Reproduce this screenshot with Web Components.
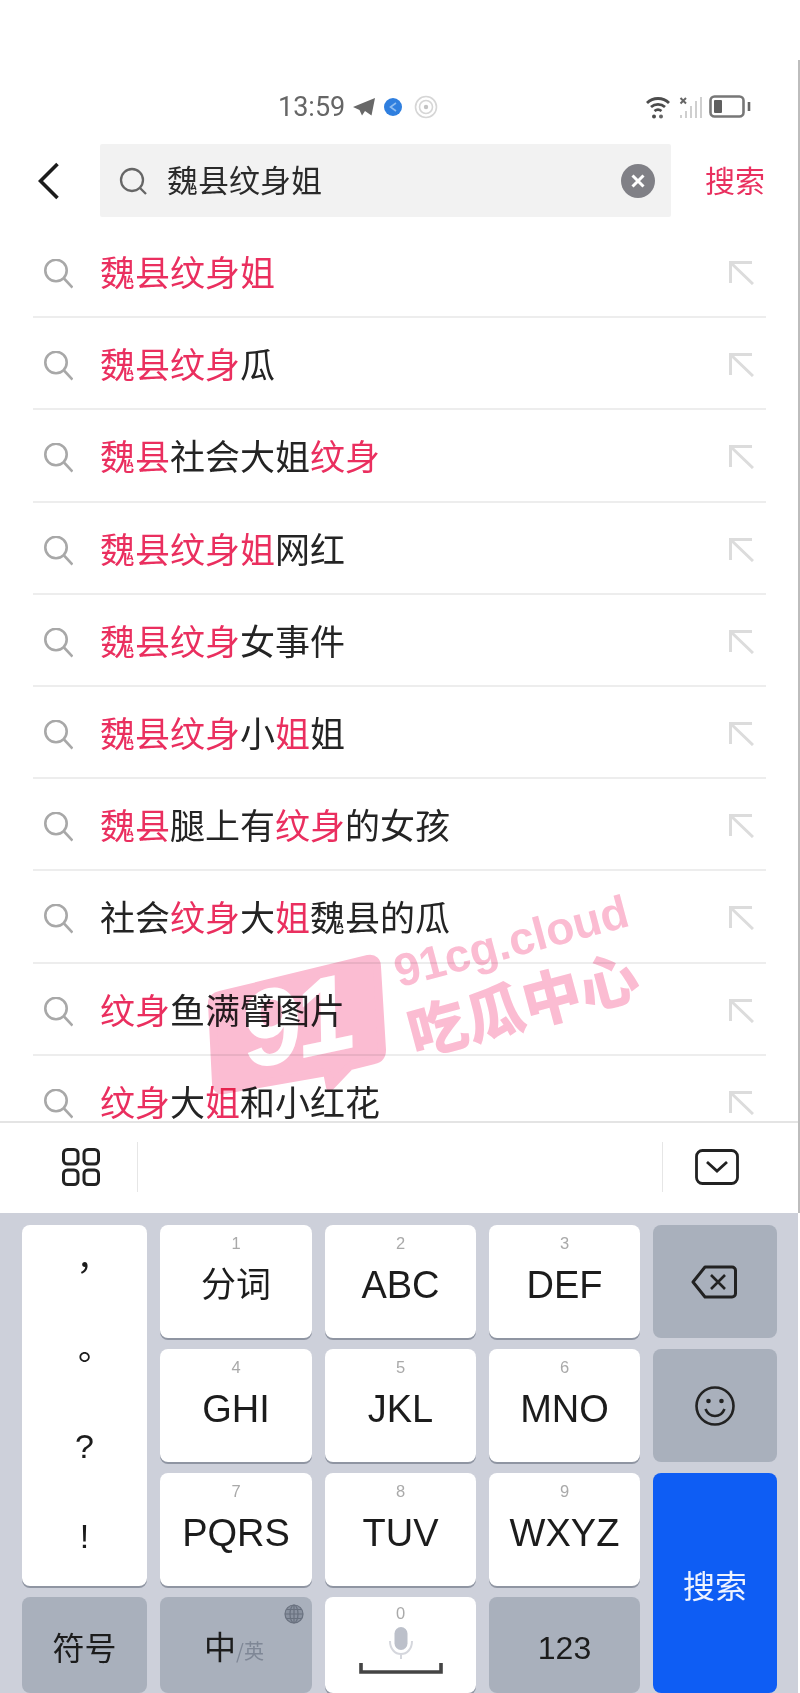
<!DOCTYPE html>
<html lang="zh"><head><meta charset="utf-8"><title>搜索</title>
<style>
html,body{margin:0;padding:0;background:#fff;height:1693px;overflow:hidden}
body{font-family:"Liberation Sans","Noto Sans CJK SC",sans-serif;color:#222}
#page{display:block;position:relative;width:800px;height:1693px;overflow:hidden;filter:blur(.45px)}
</style></head><body>
<div id="page">
<app-shell>
  <status-bar></status-bar>
  <search-header text="魏县纹身姐" action="搜索"></search-header>
  <suggest-list>
    <suggest-row><em>魏县纹身姐</em></suggest-row>
    <suggest-row><em>魏县纹身</em>瓜</suggest-row>
    <suggest-row><em>魏县</em>社会大姐<em>纹身</em></suggest-row>
    <suggest-row><em>魏县纹身姐</em>网红</suggest-row>
    <suggest-row><em>魏县纹身</em>女事件</suggest-row>
    <suggest-row><em>魏县纹身</em>小<em>姐</em>姐</suggest-row>
    <suggest-row><em>魏县</em>腿上有<em>纹身</em>的女孩</suggest-row>
    <suggest-row>社会<em>纹身</em>大<em>姐</em>魏县的瓜</suggest-row>
    <suggest-row><em>纹身</em>鱼满臂图片</suggest-row>
    <suggest-row last><em>纹身</em>大<em>姐</em>和小红花</suggest-row>
  </suggest-list>
  <kb-toolbar></kb-toolbar>
</app-shell>
<t9-keyboard></t9-keyboard>
<water-mark></water-mark>
</div>
<script>
const CJK='"Noto Sans CJK SC",sans-serif';
function def(name,html,setup){
  customElements.define(name,class extends HTMLElement{
    constructor(){super();this.attachShadow({mode:'open'}).innerHTML=html;}
    connectedCallback(){if(setup)setup(this,this.shadowRoot);}
  });
}
def('app-shell',`<style>:host{display:block;width:800px;height:1153px;margin-top:60px;box-sizing:border-box;border-right:2px solid #bdbdbd;background:#fff}</style><slot></slot>`);

def('status-bar',`<style>
:host{display:flex;align-items:center;height:84px;box-sizing:border-box;padding:34px 47px 24px 278px;font:27px/26px Roboto,sans-serif;color:#666}
.time{margin-right:8px}.r{display:flex;align-items:center;margin-left:auto;gap:8px}
svg{display:block}
</style>
<span class="time">13:59</span>
<svg width="22" height="18" viewBox="0 0 22 18" style="margin-right:8px"><path d="M22 0 0 9l6.500 3 2.500 5.500 3-4.500 6.500 4.500z" fill="#686868"/></svg>
<svg width="20" height="20" viewBox="0 0 20 20" style="margin-right:11px"><circle cx="10" cy="10" r="9" fill="#2f7fdf"/><path d="M13 6 7.500 10l5.500 4" fill="none" stroke="#8fbdf0" stroke-width="1.600"/></svg>
<svg width="24" height="24" viewBox="0 0 24 24" fill="none" stroke="#d6d6d6"><circle cx="12" cy="12" r="10.500" stroke-width="1.600"/><circle cx="12" cy="12" r="6.500" stroke-width="1.600"/><circle cx="12" cy="12" r="2.200" fill="#c4c4c4" stroke="none"/></svg>
<div class="r">
<svg width="26" height="24" viewBox="0 0 26 24" fill="none" stroke="#4c4c4c" stroke-width="2.800"><path d="M2 8c6-6 16-6 22 0M6 12c4-3.500 10-3.500 14 0M9.500 16c2-1.500 5-1.500 7 0"/><circle cx="9" cy="21.500" r="2" fill="#4c4c4c" stroke="none"/><circle cx="16" cy="21.500" r="2" fill="#666" stroke="none"/></svg>
<svg width="24" height="24" viewBox="0 0 24 24" style="margin-left:-1px;margin-right:-1px"><path d="M2.500 3 8 8.500M8 3 2.500 8.500" stroke="#666" stroke-width="2"/><g stroke="#cfcfcf" stroke-width="2"><path d="M3 23v-3M8 23v-7M13 23V11M18 23V6M23 23V2"/></g></svg>
<svg width="42" height="23" viewBox="0 0 42 23" fill="none" style="margin-top:-2px"><rect x="1.500" y="1.500" width="33" height="20" rx="4" stroke="#777" stroke-width="2.600"/><rect x="5" y="5" width="8" height="13" rx="1" fill="#5f5f5f"/><path d="M40 7v9" stroke="#666" stroke-width="2.600"/></svg>
</div>`);

def('search-header',`<style>
:host{display:flex;align-items:center;height:73px;padding-left:38px}
.back{flex:none}
.bar{flex:none;width:571px;height:73px;margin-left:41px;background:#f2f2f2;display:flex;align-items:center;box-sizing:border-box;padding:0 16px 0 19px;border-radius:2px}
.q{font:31px/40px ${CJK};color:#2a2a2a;margin:0 0 4px 19px}
.x{margin-left:auto}
.a{margin:0 0 4px 34px;font:30px/40px ${CJK};color:#e9305f}
svg{display:block}
</style>
<svg class="back" width="21" height="38" viewBox="0 0 21 38"><path d="M19.500 2 2.500 19l17 17" fill="none" stroke="#1c1c1c" stroke-width="3.600"/></svg>
<div class="bar">
<svg width="29" height="28" viewBox="0 0 29 28" fill="none" stroke="#666" stroke-width="2.300"><circle cx="13" cy="13" r="11"/><path d="M21 21l6 6"/></svg>
<span class="q"></span>
<svg class="x" width="34" height="34" viewBox="0 0 34 34"><circle cx="17" cy="17" r="17" fill="#808086"/><path d="M11.500 11.500l11 11M22.500 11.500l-11 11" stroke="#fff" stroke-width="3"/></svg>
</div>
<span class="a"></span>`,(h,s)=>{s.querySelector('.q').textContent=h.getAttribute('text');s.querySelector('.a').textContent=h.getAttribute('action');});

def('suggest-list',`<style>:host{display:block;height:895px;margin-top:9px}</style><slot></slot>`);

def('suggest-row',`<style>
:host{display:flex;align-items:center;height:92.2px;box-sizing:border-box;margin:0 32px 0 33px;padding:0 12px 0 11px;border-bottom:2px solid #ededed}
:host([last]){height:65.2px;border-bottom:0;padding-top:26px}
.t{margin-left:27px;font:35px/36px ${CJK};color:#242424;white-space:nowrap}
::slotted(em){font-style:normal;color:#ea2f5f}
.arrow{margin:4px 0 0 auto}
.mag{margin-top:6px}
svg{display:block;flex:none}
</style>
<svg class="mag" width="29" height="30" viewBox="0 0 29 30" fill="none" stroke="#a8a8a8" stroke-width="2.600"><circle cx="12" cy="11.500" r="10.700"/><path d="M20 19.500l8.500 9"/></svg>
<span class="t"><slot></slot></span>
<svg class="arrow" width="26" height="24" viewBox="0 0 26 24" fill="none" stroke="#dcdcdc" stroke-width="3"><path d="M24 1.500H2.500V22M2.500 1.500 25 23"/></svg>`);

def('kb-toolbar',`<style>
:host{display:flex;align-items:center;height:91px;box-sizing:border-box;border-top:2px solid #e4e4e4;background:#fff;padding:0 59px 2px 62px}
i{display:block;width:1px;height:50px;background:#e6e6e6}
svg{display:block;flex:none}
</style>
<svg width="38" height="38" viewBox="0 0 38 38" fill="none" stroke="#222" stroke-width="3"><rect x="1.500" y="1.500" width="14.500" height="14.500" rx="4"/><rect x="22" y="1.500" width="14.500" height="14.500" rx="4"/><rect x="1.500" y="22" width="14.500" height="14.500" rx="4"/><rect x="22" y="22" width="14.500" height="14.500" rx="4"/></svg>
<i style="margin-left:37px"></i>
<i style="margin-left:auto"></i>
<svg style="margin-left:32px" width="44" height="36" viewBox="0 0 44 36" fill="none" stroke="#222" stroke-width="2.800"><rect x="1.500" y="1.500" width="41" height="33" rx="6"/><path d="M12 13l10 9 10-9"/></svg>`);

def('kb-key',`<style>
:host{display:flex;flex-direction:column;align-items:center;position:relative;box-sizing:border-box;background:#fff;border-radius:8px;box-shadow:0 2px 0 #8f95a2;padding-top:9px;font:38px/44px "Liberation Sans",${CJK};color:#1c1c1c;min-width:0}
.d{font:16.500px/18px "Liberation Sans",sans-serif;color:#a9a9a9;margin-bottom:11px}
.d:empty{display:none}
:host([tone=gray]){background:#a9b0bc;box-shadow:none;justify-content:center;padding-top:6px}
:host([tone=blue]){background:#0e5df4;box-shadow:none;color:#eef3ff;justify-content:center;padding-top:2px;font-size:32px}
:host([small]){font-size:32px}
:host([icon]){justify-content:center;padding-top:0}
</style><span class="d"></span><slot></slot>`,(h,s)=>{s.querySelector('.d').textContent=h.getAttribute('digit')||'';});

def('t9-keyboard',`<style>
:host{display:grid;width:798px;height:480px;box-sizing:border-box;background:#cdd0da;padding:12px 0 0 22px;grid-template-columns:125px 152px 151px 151px 124px;grid-template-rows:113px 113px 113px 1fr;gap:11px 13px}
.p{grid-row:span 3;display:flex;flex-direction:column;padding:0;background:#fff;border-radius:8px;box-shadow:0 2px 0 #8f95a2;font:34px/82px "Noto Sans CJK TC",sans-serif;color:#1c1c1c;text-align:center}
.p span{display:block;height:90px}
.p .l{font-family:"Liberation Sans",sans-serif}
svg{display:block}
.zh{display:flex;align-items:baseline;margin-left:-4px}
.zh b{font-weight:400;font-size:32px}.zh small{font-size:20px;color:#7f8796}
.globe{position:absolute;right:8px;top:7px}
.cn{font-family:${CJK}}
.fc{font-size:35px;margin-top:-3px}
.sy{margin-top:-4px}
</style>
<div class="p"><span>，</span><span>。</span><span class="l">?</span><span class="l">!</span></div>
<kb-key digit="1"><span class="cn fc">分词</span></kb-key>
<kb-key digit="2">ABC</kb-key>
<kb-key digit="3">DEF</kb-key>
<kb-key tone="gray" icon><svg style="margin-left:-3px" width="46" height="34" viewBox="0 0 46 34" fill="none" stroke="#222" stroke-width="3"><path d="M14 2h27a3.500 3.500 0 0 1 3.500 3.500v23a3.500 3.500 0 0 1-3.500 3.500H14L2 17z" stroke-linejoin="round"/><path d="M20 10l14 14M34 10 20 24" stroke-width="2.600"/></svg></kb-key>
<kb-key digit="4">GHI</kb-key>
<kb-key digit="5">JKL</kb-key>
<kb-key digit="6">MNO</kb-key>
<kb-key tone="gray" icon><svg width="40" height="40" viewBox="0 0 40 40" fill="none" stroke="#222" stroke-width="2.600"><circle cx="20" cy="20" r="18.500"/><circle cx="13.500" cy="15" r="2.300" fill="#222" stroke="none"/><circle cx="26.500" cy="15" r="2.300" fill="#222" stroke="none"/><path d="M10.500 23c2 5 5.500 7 9.500 7s7.500-2 9.500-7"/></svg></kb-key>
<kb-key digit="7">PQRS</kb-key>
<kb-key digit="8">TUV</kb-key>
<kb-key digit="9">WXYZ</kb-key>
<kb-key tone="blue" style="grid-row:span 2"><span class="cn">搜索</span></kb-key>
<kb-key tone="gray" small><span class="cn sy">符号</span></kb-key>
<kb-key tone="gray" small><div class="zh cn"><b>中</b><small>/英</small></div><svg class="globe" width="20" height="20" viewBox="0 0 20 20" fill="none" stroke="#69717f" stroke-width="1.200"><circle cx="10" cy="10" r="9" fill="#8a92a0"/><ellipse cx="10" cy="10" rx="4" ry="9"/><path d="M1 10h18M2.500 5.500h15M2.500 14.500h15M10 1v18"/></svg></kb-key>
<kb-key digit="0" style="padding-top:7px"><svg style="margin-top:-10px" width="84" height="62" viewBox="0 0 84 62" fill="none"><rect x="35.500" y="4" width="13" height="23" rx="6.500" fill="#bcc0ca"/><path d="M31 18c0 8 5 13 11 13s11-5 11-13M42 31v5" stroke="#d5d7dd" stroke-width="2"/><path d="M2 40v9h80v-9" stroke="#444" stroke-width="3.600"/></svg></kb-key>
<kb-key tone="gray" small>123</kb-key>`);

def('water-mark',`<style>
:host{display:block;position:absolute;left:0;top:0;width:800px;height:1693px;pointer-events:none;mix-blend-mode:multiply}
svg{position:absolute;left:200px;top:940px;overflow:visible}
.big{position:absolute;left:240px;top:962px;font:italic 700 108px/120px "Liberation Sans",sans-serif;color:#fff;transform:rotate(-12deg);letter-spacing:-6px}
.w{position:absolute;left:392px;top:911px;width:270px;transform:rotate(-15deg);transform-origin:50% 50%;color:#fbbcd2;text-align:center}
.a{font:700 46px/54px "Liberation Sans",sans-serif;position:relative;left:-7px;white-space:nowrap}
.b{font:900 59px/70px ${CJK};position:relative;left:-12px;white-space:nowrap}
</style>
<svg width="190" height="160" viewBox="0 0 190 160"><path d="M20 55 168 19C174 18 177 21 177 27L182 110C182 116 179 119 174 120L150 126 130 147 127 132 24 150C19 151 16 148 16 143L12 63C12 59 15 56 20 55Z" fill="#fbbcd2" stroke="#fbbcd2" stroke-width="8" stroke-linejoin="round"/></svg>
<div class="big">91</div>
<div class="w"><div class="a">91cg.cloud</div><div class="b">吃瓜中心</div></div>`);
</script>
</body></html>
